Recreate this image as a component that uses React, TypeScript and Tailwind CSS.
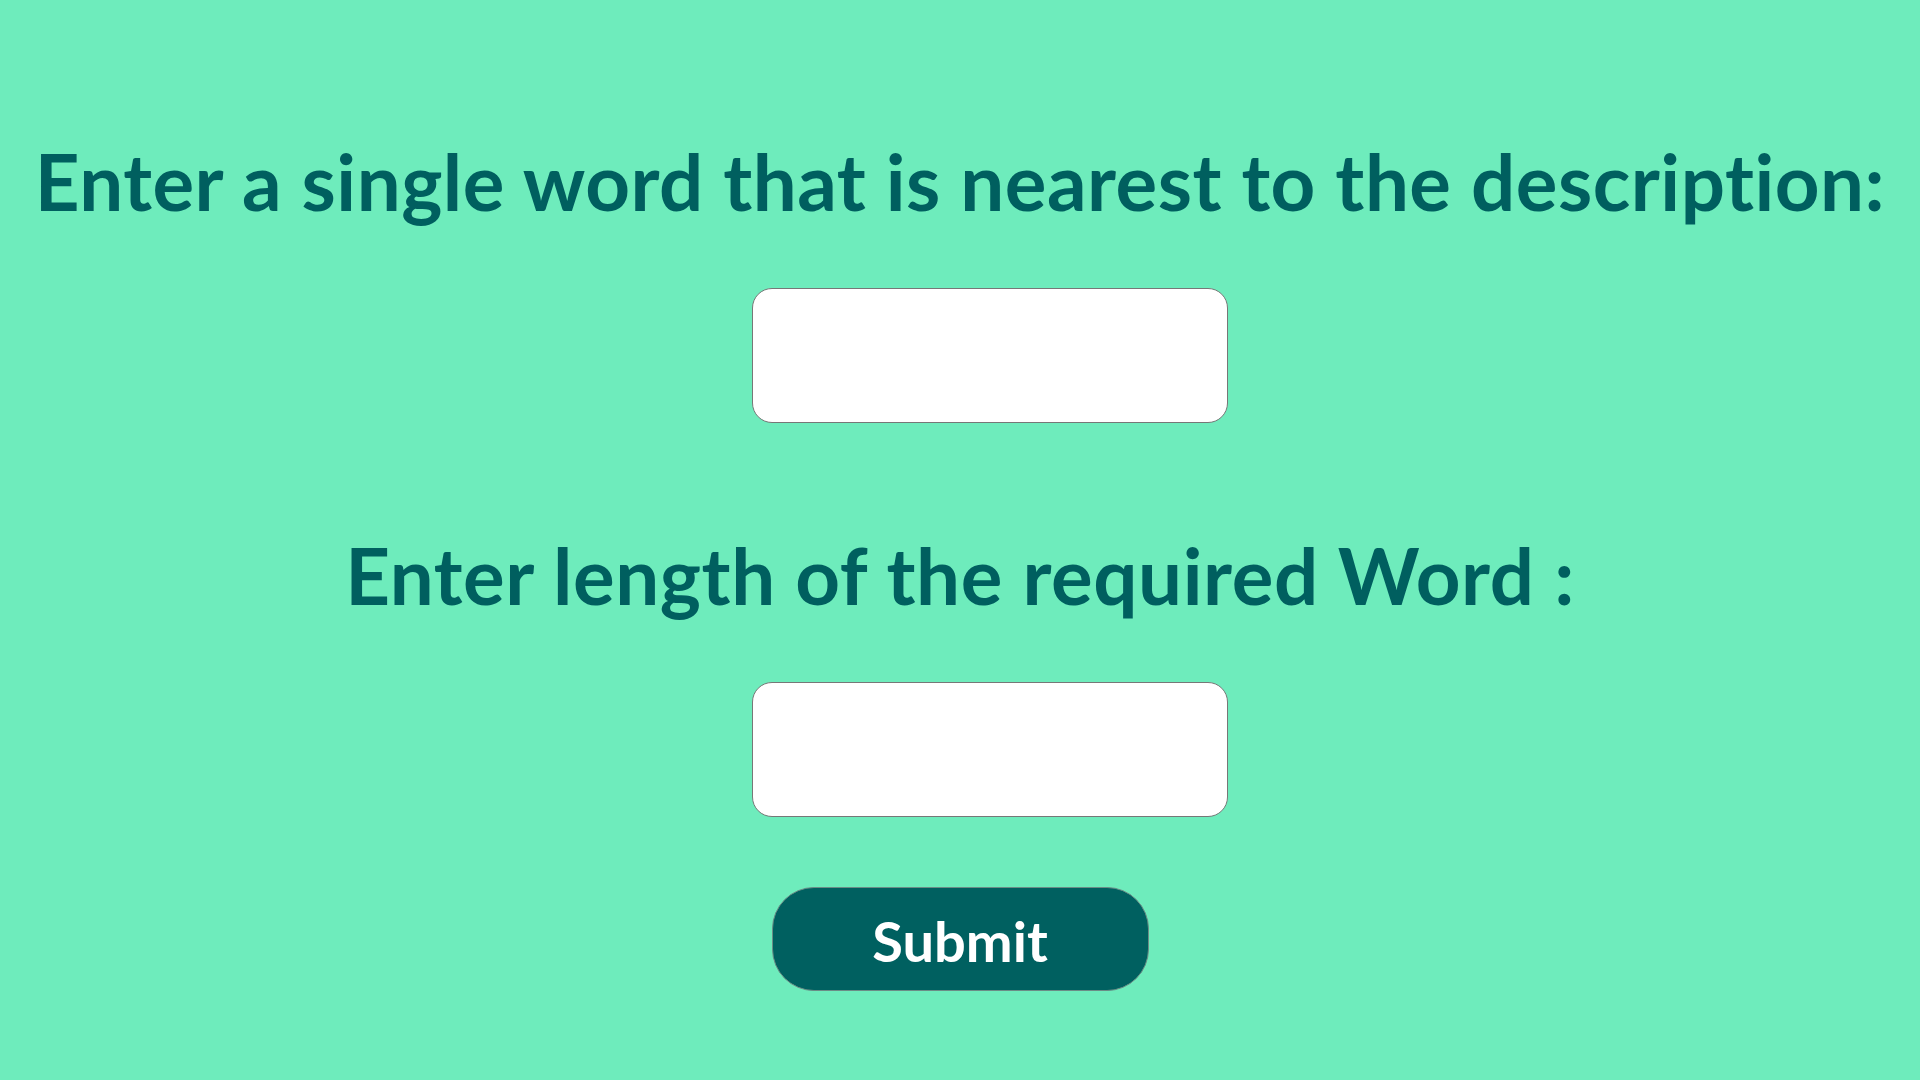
export default function App() {
  return (
    <div
      className="min-h-screen w-full bg-[#6eecbc] flex flex-col items-center overflow-hidden [font-variant-ligatures:none]"
      style={{ fontFamily: '"Comic Sans MS", Lato, "Noto Sans", sans-serif' }}
    >
      <h1 className="mt-[142px] text-[78px] leading-none font-bold text-[#005f5f] whitespace-nowrap tracking-[0.5px]">
        Enter a single word that is nearest to the description:
      </h1>
      <input
        type="text"
        className="mt-[68px] ml-[60px] w-[476px] h-[135px] bg-white border border-[#777777] rounded-[20px] outline-none"
      />
      <h2 className="mt-[113px] text-[78px] leading-none font-bold text-[#005f5f] whitespace-nowrap tracking-[0.6px]">
        Enter length of the required Word :
      </h2>
      <input
        type="text"
        className="mt-[68px] ml-[60px] w-[476px] h-[135px] bg-white border border-[#777777] rounded-[20px] outline-none"
      />
      <button className="mt-[70px] w-[377px] h-[104px] bg-[#006060] border border-[#6b8c86] rounded-[42px] text-white text-[56px] font-bold leading-none pt-[4px]">
        Submit
      </button>
    </div>
  );
}
